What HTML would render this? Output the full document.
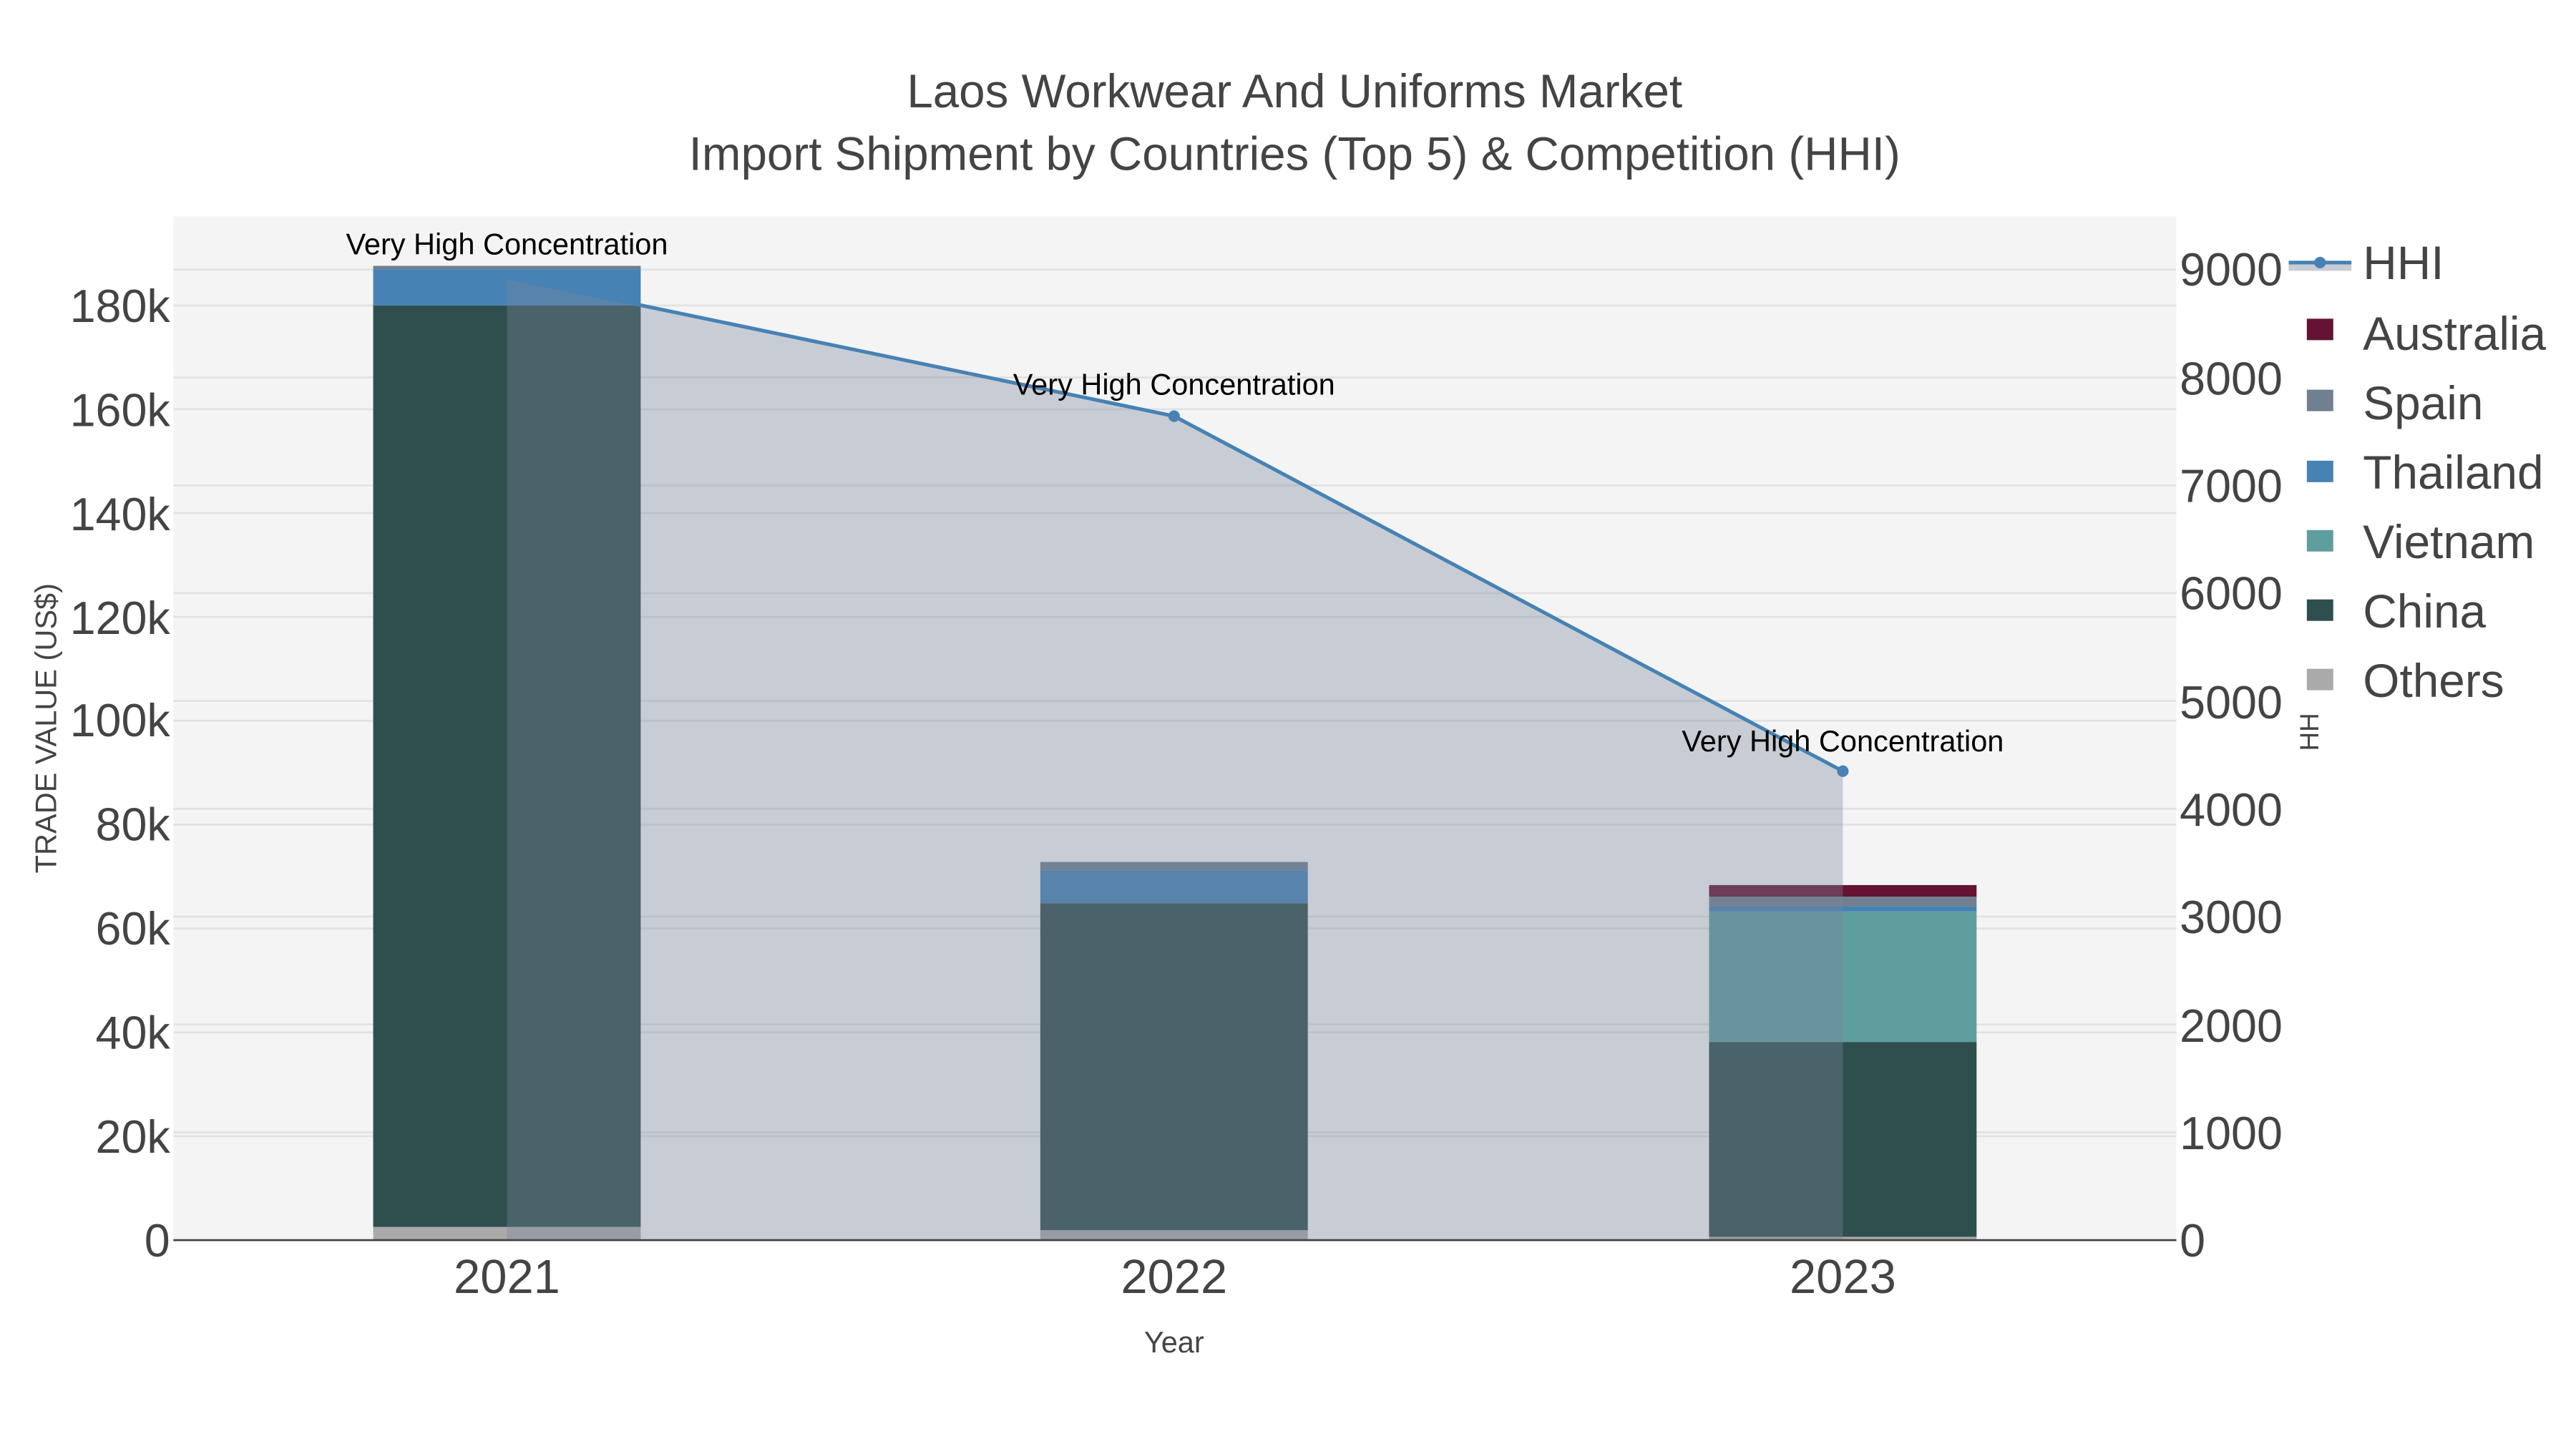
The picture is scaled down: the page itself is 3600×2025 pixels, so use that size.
<!DOCTYPE html>
<html><head><meta charset="utf-8"><style>html,body{margin:0;padding:0;background:#fff}svg{display:block}text{font-family:"Liberation Sans",sans-serif}</style></head>
<body>
<svg width="3600" height="2025" viewBox="0 0 1560 877.5" xmlns="http://www.w3.org/2000/svg">
<rect x="0" y="0" width="1560" height="877.5" fill="#fff"/>
<rect x="105" y="131" width="1213" height="620" fill="#f4f4f4"/>
<g stroke="#e2e2e2" stroke-width="1.2">
<line x1="105" x2="1318" y1="688.1" y2="688.1"/><line x1="105" x2="1318" y1="625.2" y2="625.2"/><line x1="105" x2="1318" y1="562.3" y2="562.3"/><line x1="105" x2="1318" y1="499.4" y2="499.4"/><line x1="105" x2="1318" y1="436.5" y2="436.5"/><line x1="105" x2="1318" y1="373.6" y2="373.6"/><line x1="105" x2="1318" y1="310.7" y2="310.7"/><line x1="105" x2="1318" y1="247.8" y2="247.8"/><line x1="105" x2="1318" y1="185" y2="185"/>
<line x1="105" x2="1318" y1="685.7" y2="685.7"/><line x1="105" x2="1318" y1="620.4" y2="620.4"/><line x1="105" x2="1318" y1="555.1" y2="555.1"/><line x1="105" x2="1318" y1="489.8" y2="489.8"/><line x1="105" x2="1318" y1="424.5" y2="424.5"/><line x1="105" x2="1318" y1="359.2" y2="359.2"/><line x1="105" x2="1318" y1="293.9" y2="293.9"/><line x1="105" x2="1318" y1="228.6" y2="228.6"/><line x1="105" x2="1318" y1="163.3" y2="163.3"/>
</g>
<rect x="226" y="743" width="162" height="8" fill="#aaaaaa"/>
<rect x="226" y="185" width="162" height="558" fill="#2f4f4f"/>
<rect x="226" y="163" width="162" height="22" fill="#4682b4"/>
<rect x="226" y="161" width="162" height="2" fill="#708090"/>
<rect x="630" y="745" width="162" height="6" fill="#aaaaaa"/>
<rect x="630" y="547" width="162" height="198" fill="#2f4f4f"/>
<rect x="630" y="527" width="162" height="20" fill="#4682b4"/>
<rect x="630" y="522" width="162" height="5" fill="#708090"/>
<rect x="1035" y="749" width="162" height="2" fill="#aaaaaa"/>
<rect x="1035" y="631" width="162" height="118" fill="#2f4f4f"/>
<rect x="1035" y="552" width="162" height="79" fill="#5f9e9e"/>
<rect x="1035" y="549" width="162" height="3" fill="#4682b4"/>
<rect x="1035" y="543" width="162" height="6" fill="#708090"/>
<rect x="1035" y="536" width="162" height="7" fill="#641335"/>
<polygon points="307,168 711,252 1116,467 1116,751 307,751" fill="rgb(122,133,155)" fill-opacity="0.36"/>
<line x1="105" x2="1318" y1="751" y2="751" stroke="#444" stroke-width="1.2"/>
<polyline points="307,168 711,252 1116,467" fill="none" stroke="#4682b4" stroke-width="2.2"/>
<circle cx="711" cy="252" r="3.5" fill="#4682b4"/><circle cx="1116" cy="467" r="3.5" fill="#4682b4"/>
<g font-size="18" fill="#000" text-anchor="middle">
<text x="307" y="154">Very High Concentration</text>
<text x="711" y="239">Very High Concentration</text>
<text x="1116" y="455">Very High Concentration</text>
</g>
<g font-size="28" fill="#444" text-anchor="end">
<text x="103" y="761">0</text><text x="103" y="698">20k</text><text x="103" y="635">40k</text><text x="103" y="572">60k</text><text x="103" y="509">80k</text><text x="103" y="446">100k</text><text x="103" y="384">120k</text><text x="103" y="321">140k</text><text x="103" y="258">160k</text><text x="103" y="195">180k</text>
</g>
<g font-size="28" fill="#444">
<text x="1320" y="761">0</text><text x="1320" y="696">1000</text><text x="1320" y="631">2000</text><text x="1320" y="565">3000</text><text x="1320" y="500">4000</text><text x="1320" y="435">5000</text><text x="1320" y="369">6000</text><text x="1320" y="304">7000</text><text x="1320" y="239">8000</text><text x="1320" y="173">9000</text>
</g>
<g font-size="29" fill="#444" text-anchor="middle">
<text x="307" y="783">2021</text><text x="711" y="783">2022</text><text x="1116" y="783">2023</text>
</g>
<g font-size="28.4" fill="#444" text-anchor="middle">
<text x="784" y="65">Laos Workwear And Uniforms Market</text>
<text x="784" y="103">Import Shipment by Countries (Top 5) &amp; Competition (HHI)</text>
</g>
<text x="711" y="819" font-size="18" fill="#444" text-anchor="middle">Year</text>
<text transform="translate(34,441) rotate(-90)" font-size="18" fill="#444" text-anchor="middle">TRADE VALUE (US$)</text>
<text transform="translate(1404,441) rotate(-90)" font-size="16" fill="#444" text-anchor="middle">HHI</text>
<rect x="1384" y="138" width="176" height="295" fill="#fff"/>
<rect x="1386" y="158" width="38" height="6" fill="#c8ccd4"/>
<line x1="1386" x2="1424" y1="159" y2="159" stroke="#4682b4" stroke-width="2.2"/>
<circle cx="1405" cy="159" r="3.5" fill="#4682b4"/>
<rect x="1397" y="193" width="16" height="13" fill="#641335"/>
<rect x="1397" y="236" width="16" height="13" fill="#708090"/>
<rect x="1397" y="279" width="16" height="13" fill="#4682b4"/>
<rect x="1397" y="321" width="16" height="13" fill="#5f9e9e"/>
<rect x="1397" y="363" width="16" height="13" fill="#2f4f4f"/>
<rect x="1397" y="405" width="16" height="13" fill="#aaaaaa"/>
<g font-size="28.5" fill="#444">
<text x="1431" y="169">HHI</text><text x="1431" y="212">Australia</text><text x="1431" y="254">Spain</text><text x="1431" y="296">Thailand</text><text x="1431" y="338">Vietnam</text><text x="1431" y="380">China</text><text x="1431" y="422">Others</text>
</g>
</svg>
</body></html>
